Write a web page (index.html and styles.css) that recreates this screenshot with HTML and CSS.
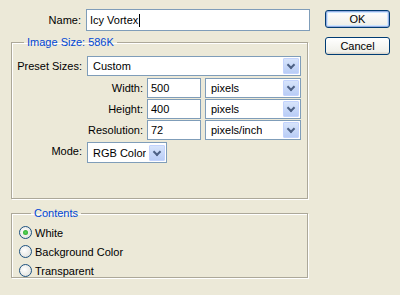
FILE: index.html
```html
<!DOCTYPE html>
<html lang="en">

<head>
    <meta charset="UTF-8">
    <title>New</title>
    <link rel="stylesheet" href="styles.css">
</head>

<body>
    <div class="dialog">
        <div class="main">
            <div class="name-row">
                <label class="label">Name:</label>
                <div class="textbox name-box">Icy Vortex<span class="caret"></span></div>
            </div>

            <fieldset class="group size-group">
                <legend>Image Size: 586K</legend>

                <div class="row">
                    <label class="label">Preset Sizes:</label>
                    <div class="combo preset-combo"><span>Custom</span><i class="arrow"></i></div>
                </div>

                <div class="row">
                    <label class="label wide">Width:</label>
                    <div class="textbox num-box">500</div>
                    <div class="combo unit-combo"><span>pixels</span><i class="arrow"></i></div>
                </div>

                <div class="row">
                    <label class="label wide">Height:</label>
                    <div class="textbox num-box">400</div>
                    <div class="combo unit-combo"><span>pixels</span><i class="arrow"></i></div>
                </div>

                <div class="row">
                    <label class="label wide">Resolution:</label>
                    <div class="textbox num-box">72</div>
                    <div class="combo unit-combo"><span>pixels/inch</span><i class="arrow"></i></div>
                </div>

                <div class="row">
                    <label class="label">Mode:</label>
                    <div class="combo mode-combo"><span>RGB Color</span><i class="arrow"></i></div>
                </div>
            </fieldset>

            <fieldset class="group contents-group">
                <legend>Contents</legend>
                <div class="radio checked"><i class="dot"></i>White</div>
                <div class="radio"><i class="dot"></i>Background Color</div>
                <div class="radio"><i class="dot"></i>Transparent</div>
            </fieldset>
        </div>

        <div class="buttons">
            <button class="btn default">OK</button>
            <button class="btn">Cancel</button>
        </div>
    </div>
</body>

</html>
```

FILE: styles.css
```css
* {
    margin: 0;
    padding: 0;
    box-sizing: border-box;
}

body {
    font-family: 'Liberation Sans', Arial, sans-serif;
    font-size: 11px;
    color: #000;
    background-color: #ece9d8;
    width: 400px;
    height: 295px;
    overflow: hidden;
}

.dialog {
    display: flex;
    padding-top: 9px;
}

.main {
    width: 310px;
}

.label {
    width: 81px;
    text-align: right;
    margin-right: 5px;
    flex-shrink: 0;
    white-space: nowrap;
}

.label.wide {
    width: 142px;
    margin-right: 4px;
}

.name-row {
    display: flex;
    align-items: center;
    height: 22px;
}

.textbox {
    height: 22px;
    background-color: #fff;
    border: 1px solid #7f9db9;
    padding: 0 3px;
    display: flex;
    align-items: center;
    white-space: nowrap;
}

.name-box {
    width: 224px;
}

.caret {
    display: inline-block;
    width: 1px;
    height: 13px;
    background-color: #000;
    margin-left: 1px;
}

.group {
    margin-left: 11px;
    width: 297px;
    border: 1px solid #aca899;
    box-shadow: inset 1px 1px 0 #fff, 1px 1px 0 #fff;
}

.group legend {
    margin-left: 12px;
    padding: 0 3px;
    color: #0046d5;
    font-size: 11px;
}

.size-group {
    margin-top: 5px;
    height: 163px;
    padding: 8px 0 0 0;
}

.size-group .label {
    width: 70px;
}

.size-group .label.wide {
    width: 131px;
}

.row {
    display: flex;
    align-items: center;
    height: 20px;
    margin-bottom: 1px;
}

.row:first-of-type {
    margin-bottom: 2px;
}

.num-box {
    width: 54px;
    height: 20px;
}

.combo {
    height: 20px;
    background-color: #fff;
    border: 1px solid #7f9db9;
    display: flex;
    align-items: center;
    justify-content: space-between;
    padding: 1px 1px 1px 5px;
    white-space: nowrap;
}

.combo span {
    overflow: hidden;
}

.preset-combo {
    width: 214px;
}

.unit-combo {
    width: 96px;
    margin-left: 4px;
}

.mode-combo {
    width: 80px;
    height: 21px;
    margin-top: 3px;
}

.arrow {
    width: 16px;
    height: 16px;
    flex-shrink: 0;
    margin-left: 2px;
    background: linear-gradient(#d7e4fb, #b9cdf6);
    border: 1px solid #c3d3fd;
    border-radius: 1px;
    position: relative;
}

.arrow::after {
    content: "";
    position: absolute;
    left: 4px;
    top: 3px;
    width: 4px;
    height: 4px;
    border-right: 2px solid #4d6185;
    border-bottom: 2px solid #4d6185;
    transform: rotate(45deg);
}

.contents-group {
    margin-top: 8px;
    height: 71px;
    padding: 4px 0 0 7px;
}

.radio {
    display: flex;
    align-items: center;
    height: 19px;
}

.dot {
    width: 13px;
    height: 13px;
    border-radius: 50%;
    border: 1px solid #1c5180;
    background: radial-gradient(circle at 40% 40%, #fff, #dcdcd6);
    margin-right: 3px;
    position: relative;
}

.radio.checked .dot::after {
    content: "";
    position: absolute;
    left: 3px;
    top: 3px;
    width: 5px;
    height: 5px;
    border-radius: 50%;
    background: radial-gradient(circle, #5cd65c, #21a121);
}

.buttons {
    display: flex;
    flex-direction: column;
    gap: 9px;
    margin-left: 15px;
    padding-top: 1px;
}

.btn {
    width: 65px;
    height: 18px;
    font-family: inherit;
    font-size: 11px;
    border: 1px solid #003c74;
    border-radius: 3px;
    background: linear-gradient(#fff, #f0f0ea 85%, #d6d0c5);
    color: #000;
}

.btn.default {
    box-shadow: inset 0 0 0 1px #97aee2, inset 0 0 0 2px #cee7ff;
}
```
